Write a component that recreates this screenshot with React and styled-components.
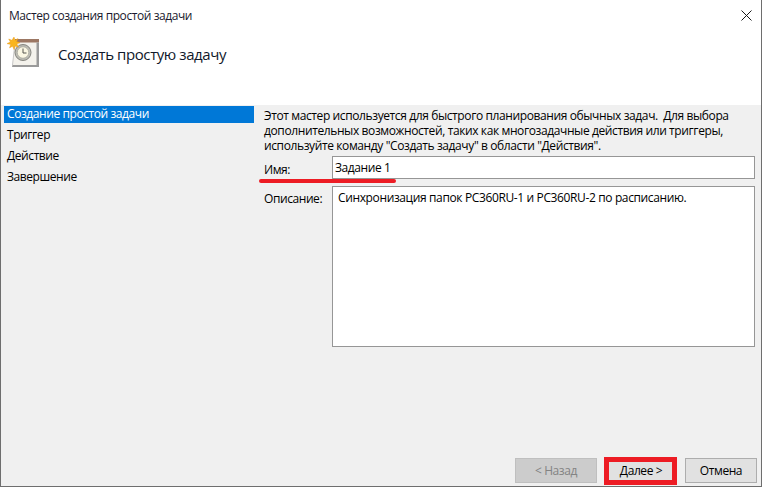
import React from 'react'
import styled, { createGlobalStyle } from 'styled-components'

const GlobalStyle = createGlobalStyle`
    html, body {
        margin: 0;
        padding: 0;
        background: #ffffff;
    }
    * {
        box-sizing: border-box;
    }
`

const steps = ['Создание простой задачи', 'Триггер', 'Действие', 'Завершение']

function TaskIcon() {
    return (
        <svg width="34" height="32" viewBox="0 0 34 32">
            <path d="M8 5h24v25H5z" fill="#f4f2ec" />
            <path d="M8 2h24v3.5H8z" fill="#9c7763" />
            <path d="M29.5 5.5h2.5V30H5l.5-2h24z" fill="#9a9a9a" />
            <path d="M5.5 28l2.5-22" fill="none" stroke="#c9c9c9" />
            <circle cx="16" cy="15.5" r="8" fill="#bcbcb4" stroke="#85857f" />
            <circle cx="16" cy="15.5" r="5.7" fill="#faf7e3" stroke="#9a9a92" strokeWidth="0.6" />
            <path d="M16 11.5V16h3.5" fill="none" stroke="#55554f" strokeWidth="1" />
            <path d="M7 0l1 3.2 3-1.7-1.4 3.1 3.4 1-3.2 1.5 1.7 3.2-3.4-1.3-1 3.6-1.6-3.4-3 1.7 1.2-3.4-3.7-.9 3.4-1.5-1.7-3.1 3.2 1.3z" fill="#f9b51c" stroke="#e8930f" strokeWidth="0.4" />
        </svg>
    )
}

export default function App() {
    return (
        <>
            <GlobalStyle />
            <Window>
                <TitleBar>
                    <Title>Мастер создания простой задачи</Title>
                    <CloseIcon width="11" height="11" viewBox="0 0 11 11">
                        <path d="M0.5 0.5l10 10M10.5 0.5l-10 10" stroke="#1a1a1a" fill="none" />
                    </CloseIcon>
                </TitleBar>
                <Header>
                    <TaskIcon />
                    <Heading>Создать простую задачу</Heading>
                </Header>
                <Body>
                    <Main>
                        <Sidebar>
                            {steps.map((step, i) => (
                                <Step key={step} $active={i === 0}>{step}</Step>
                            ))}
                        </Sidebar>
                        <Content>
                            <Intro>
                                Этот мастер используется для быстрого планирования обычных задач.&nbsp; Для выбора<br />
                                дополнительных возможностей, таких как многозадачные действия или триггеры,<br />
                                используйте команду "Создать задачу" в области "Действия".
                            </Intro>
                            <NameRow>
                                <NameLabel>Имя:</NameLabel>
                                <Field>Задание 1</Field>
                                <Underline />
                            </NameRow>
                            <DescRow>
                                <Label>Описание:</Label>
                                <Memo>Синхронизация папок PC360RU-1 и PC360RU-2 по расписанию.</Memo>
                            </DescRow>
                        </Content>
                    </Main>
                    <Footer>
                        <Button disabled>&lt; Назад</Button>
                        <NextButton>
                            Далее &gt;
                            <Highlight />
                        </NextButton>
                        <CancelButton>Отмена</CancelButton>
                    </Footer>
                </Body>
            </Window>
        </>
    )
}

// styled components
const Window = styled.div`
    width: 762px;
    height: 487px;
    display: flex;
    flex-direction: column;
    background: #ffffff;
    border-left: 1px solid #6e6e6e;
    border-right: 1px solid #6e6e6e;
    border-bottom: 1px solid #6e6e6e;
    font-family: "Open Sans", "Noto Sans", sans-serif;
    font-size: 12px;
    letter-spacing: -0.42px;
    color: #000000;
`

const TitleBar = styled.div`
    height: 31px;
    flex-shrink: 0;
    display: flex;
    align-items: center;
    justify-content: space-between;
    padding: 0 9px 0 8px;
    color: #1a1a2e;
`

const Title = styled.span`
    font-size: 12px;
`

const CloseIcon = styled.svg`
    display: block;
`

const Header = styled.div`
    height: 74px;
    flex-shrink: 0;
    display: flex;
    align-items: flex-start;
    gap: 17px;
    padding: 6px 0 0 6px;
`

const Heading = styled.h1`
    margin: 5px 0 0;
    font-size: 15px;
    font-weight: 400;
    line-height: 24px;
    letter-spacing: -0.42px;
    color: #10182a;
`

const Body = styled.div`
    flex: 1;
    min-height: 0;
    display: flex;
    flex-direction: column;
    background: #f0f0f0;
`

const Main = styled.div`
    flex: 1;
    min-height: 0;
    display: flex;
`

const Sidebar = styled.div`
    width: 263px;
    flex-shrink: 0;
    padding: 1px 0 0 3px;
`

const Step = styled.div`
    width: 250px;
    height: ${pr => (pr.$active ? '17px' : '21px')};
    line-height: ${pr => (pr.$active ? '15px' : '21px')};
    margin-bottom: ${pr => (pr.$active ? '1px' : '0')};
    padding-left: 3px;
    background: ${pr => (pr.$active ? '#0078d7' : 'transparent')};
    color: ${pr => (pr.$active ? '#ffffff' : '#000000')};
    white-space: nowrap;
`

const Content = styled.div`
    flex: 1;
    padding: 3px 6px 0 0;
`

const Intro = styled.p`
    margin: 0;
    line-height: 15px;
    letter-spacing: -0.39px;
    white-space: nowrap;
`

const NameRow = styled.div`
    position: relative;
    display: flex;
    align-items: flex-start;
    margin-top: 3px;
`

const DescRow = styled.div`
    display: flex;
    align-items: flex-start;
    margin-top: 7px;
`

const Label = styled.div`
    width: 68px;
    flex-shrink: 0;
    padding-top: 5px;
    line-height: 16px;
`

const NameLabel = styled(Label)`
    padding-top: 6px;
`

const Field = styled.div`
    flex: 1;
    height: 23px;
    padding: 1px 2px 0;
    line-height: 20px;
    background: #ffffff;
    border: 1px solid #969696;
`

const Memo = styled.div`
    flex: 1;
    height: 161px;
    padding: 3px 6px 3px 5px;
    line-height: 16px;
    letter-spacing: -0.37px;
    background: #ffffff;
    border: 1px solid #969696;
`

const Underline = styled.div`
    position: absolute;
    left: -5px;
    top: 23px;
    width: 137px;
    height: 4px;
    border-radius: 2px;
    background: #ed1c24;
`

const Footer = styled.div`
    height: 28px;
    flex-shrink: 0;
    display: flex;
    justify-content: flex-end;
    gap: 9px;
    padding: 0 4px 0 0;
`

const Button = styled.button`
    width: 82px;
    height: 25px;
    padding: 0;
    font: inherit;
    letter-spacing: inherit;
    color: #000000;
    background: #e1e1e1;
    border: 1px solid #adadad;
    &:disabled {
        color: #838383;
        background: #cccccc;
        border-color: #bfbfbf;
    }
`

const NextButton = styled(Button)`
    position: relative;
    width: 70px;
`

const CancelButton = styled(Button)`
    width: 72px;
`

const Highlight = styled.span`
    position: absolute;
    inset: -2px -2px -3px -3px;
    border: 5px solid #ed1c24;
`
